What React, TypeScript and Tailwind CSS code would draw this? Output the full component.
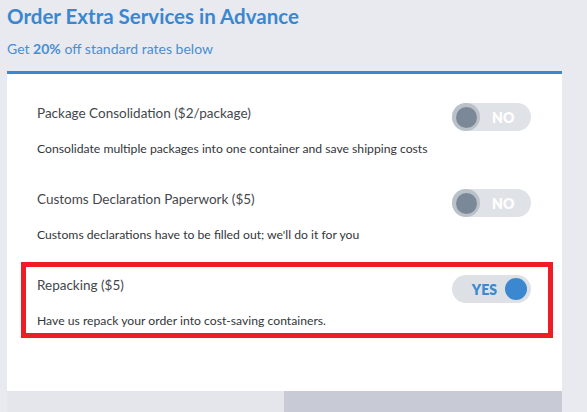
import React from "react";

type Service = {
  id: string;
  title: string;
  description: string;
  enabled: boolean;
};

const services: Service[] = [
  {
    id: "consolidation",
    title: "Package Consolidation ($2/package)",
    description:
      "Consolidate multiple packages into one container and save shipping costs",
    enabled: false,
  },
  {
    id: "customs",
    title: "Customs Declaration Paperwork ($5)",
    description: "Customs declarations have to be filled out; we'll do it for you",
    enabled: false,
  },
  {
    id: "repacking",
    title: "Repacking ($5)",
    description: "Have us repack your order into cost-saving containers.",
    enabled: true,
  },
];

const Toggle = ({ on }: { on: boolean }) => {
  if (on) {
    return (
      <div className="flex h-[28px] w-[79px] items-center justify-end rounded-full bg-[#dde1e5] pr-[4px]">
        <span className="mr-[8px] text-[14px] font-extrabold text-[#3d89cf]">
          YES
        </span>
        <span className="h-[22px] w-[22px] rounded-full bg-[#3b88d0]" />
      </div>
    );
  }
  return (
    <div className="flex h-[28px] w-[79px] items-center rounded-full bg-[#dfe2e6]">
      <span className="flex h-[28px] w-[28px] items-center justify-center rounded-full bg-[#bac1c9]">
        <span className="h-[21px] w-[21px] rounded-full bg-[#7b8897]" />
      </span>
      <span className="ml-[12px] text-[14px] font-extrabold text-white">NO</span>
    </div>
  );
};

export default function App() {
  return (
    <div className="h-[412px] w-[587px] overflow-hidden bg-[#e8eaef] font-['Lato',sans-serif]">
      <div className="px-[7px] pt-[3px]">
        <h1 className="text-[20.5px] font-bold leading-[26px] text-[#3b87cf]">
          Order Extra Services in Advance
        </h1>
        <p className="mt-[11px] text-[14px] leading-[18px] text-[#4a8dd2]">
          Get <span className="font-bold">20%</span> off standard rates below
        </p>
      </div>

      <div className="ml-[7px] mt-[13px] w-[555px] border-t-[3px] border-[#3a88d0] bg-white">
        <div className="flex flex-col gap-[10px] pb-[53px] pl-[14px] pr-[9px] pt-[16px]">
          {services.map((s) => (
            <div
              key={s.id}
              className={`h-[76px] border-[5px] pl-[11px] pr-[17px] pt-[8px] ${
                s.enabled ? "border-[#ee1c25]" : "border-transparent"
              }`}
            >
              <div className="flex items-start justify-between">
                <span className="text-[13.5px] leading-[20px] text-[#44474c]">
                  {s.title}
                </span>
                <Toggle on={s.enabled} />
              </div>
              <p className="mt-[10px] text-[12.2px] leading-[16px] text-[#33363a]">
                {s.description}
              </p>
            </div>
          ))}
        </div>
        <div className="flex h-[21px]">
          <div className="w-[277px] bg-[#e4e6eb]" />
          <div className="flex-1 bg-[#c8cad6]" />
        </div>
      </div>
    </div>
  );
}
